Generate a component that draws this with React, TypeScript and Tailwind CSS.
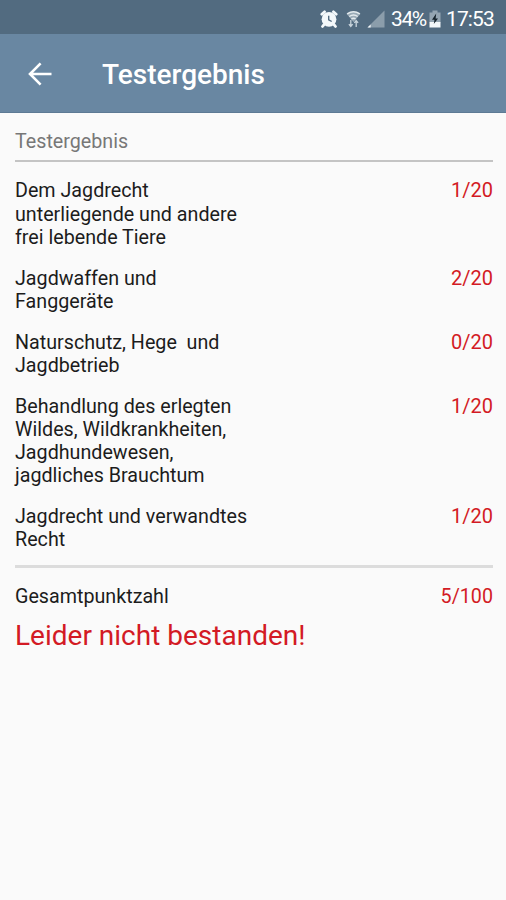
import React from "react";

const results = [
  {
    lines: ["Dem Jagdrecht", "unterliegende und andere", "frei lebende Tiere"],
    score: "1/20",
  },
  { lines: ["Jagdwaffen und", "Fanggeräte"], score: "2/20" },
  { lines: ["Naturschutz, Hege  und", "Jagdbetrieb"], score: "0/20" },
  {
    lines: [
      "Behandlung des erlegten",
      "Wildes, Wildkrankheiten,",
      "Jagdhundewesen,",
      "jagdliches Brauchtum",
    ],
    score: "1/20",
  },
  { lines: ["Jagdrecht und verwandtes", "Recht"], score: "1/20" },
];

const AlarmIcon = () => (
  <svg width="18" height="18" viewBox="0 0 18 18" fill="none">
    <circle cx="9" cy="9.3" r="7.4" fill="#f4f8fa" />
    <path
      d="M1.8 4.2 4.6 1.8M16.2 4.2l-2.8-2.4M3.8 14.8l-1.3 1.7M14.2 14.8l1.3 1.7"
      stroke="#f4f8fa"
      strokeWidth="2.8"
      strokeLinecap="round"
    />
    <path d="M8.7 5.8v4.1l3 1.6" stroke="#526b80" strokeWidth="1.4" />
  </svg>
);

const WifiIcon = () => (
  <svg width="15" height="18" viewBox="0 0 15 18" fill="none">
    <path d="M.5 3.8Q7.5-1 14.5 3.8L7.5 12Z" fill="#9aabb7" />
    <path
      d="M1.2 3.8Q7.5-.2 13.8 3.8M3.3 6.5q4.2-2.8 8.4 0M5.4 9q2.1-1.4 4.2 0"
      stroke="#e3eaee"
      strokeWidth="1.5"
    />
    <path
      d="M4.8 10v6M2.9 14.2l1.9 2.3 1.9-2.3M10.2 17v-6M8.3 12.8l1.9-2.3 1.9 2.3"
      stroke="#c8d4dc"
      strokeWidth="1.3"
    />
  </svg>
);

const SignalIcon = () => (
  <svg width="18" height="18" viewBox="0 0 18 18">
    <path d="M17.5.5v17H.5Z" fill="#8b9dab" />
    <path d="M3.6 14.4v3.1H.5Z" fill="#f4f8fa" />
  </svg>
);

const BatteryIcon = () => (
  <svg width="12" height="18" viewBox="0 0 12 18">
    <path d="M3.5.5h5v2h3v10H.5v-10h3Z" fill="#94a5b2" />
    <path d="M.5 12h11v5.5H.5Z" fill="#f4f8fa" />
    <path d="M7.2 3.5 3 9.8h2.5L4.8 14 9 8.4H6.6Z" fill="#16232c" />
  </svg>
);

const BackIcon = () => (
  <svg width="24" height="24" viewBox="0 0 24 24" fill="none">
    <path
      d="M23.5 12H2M12.6 1.4 2 12l10.6 10.6"
      stroke="#fff"
      strokeWidth="2.6"
    />
  </svg>
);

export default function App() {
  return (
    <div className="flex h-[900px] w-[506px] flex-col bg-[#fafafa] font-['Roboto',sans-serif] text-[#1c1c1c]">
      <div className="flex h-[34px] items-center bg-[#526b80] pt-[3px] pl-[320px] text-white">
        <AlarmIcon />
        <div className="ml-2 flex">
          <WifiIcon />
        </div>
        <div className="ml-[6px] flex">
          <SignalIcon />
        </div>
        <span className="ml-[6px] w-[35px] text-[21px] leading-6 tracking-[-1.4px]">
          34%
        </span>
        <div className="ml-[3px] flex">
          <BatteryIcon />
        </div>
        <span className="ml-[5px] text-[21px] leading-6 tracking-[-0.9px]">
          17:53
        </span>
      </div>

      <header className="flex h-[79px] items-center border-b border-[#5d7a94] bg-[#6987a2] pt-[2px] pl-7">
        <BackIcon />
        <h1 className="ml-[50px] pt-[2px] text-[28px] leading-8 font-medium text-white">
          Testergebnis
        </h1>
      </header>

      <main className="pt-[17px] pr-[13px] pl-[15px] text-[19.7px] leading-[23.25px]">
        <h2 className="h-[30px] text-[#777777]">Testergebnis</h2>
        <div className="h-[2px] bg-[#c4c4c4]" />

        <div className="mt-[17.4px] flex flex-col gap-[17.5px]">
          {results.map((result, index) => (
            <div key={index} className="flex justify-between">
              <div className="whitespace-pre">
                {result.lines.map((line) => (
                  <p key={line}>{line}</p>
                ))}
              </div>
              <span className="text-[20px] text-[#d31a24]">{result.score}</span>
            </div>
          ))}
        </div>

        <div className="mt-[13.3px] h-[3px] bg-[#dcdcdc]" />
        <div className="mt-[17px] flex justify-between">
          <span>Gesamtpunktzahl</span>
          <span className="text-[#d31a24]">5/100</span>
        </div>
        <p className="mt-[11.5px] text-[28px] leading-8 text-[#d31a24]">
          Leider nicht bestanden!
        </p>
      </main>
    </div>
  );
}
